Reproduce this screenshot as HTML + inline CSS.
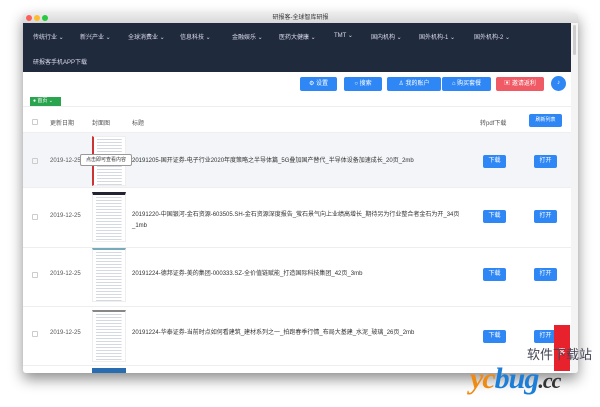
<!DOCTYPE html>
<html><head><meta charset="utf-8"><style>
*{margin:0;padding:0;box-sizing:border-box}
body{width:600px;height:407px;background:#fff;font-family:"Liberation Sans","Noto Sans CJK SC",sans-serif;position:relative;overflow:hidden;color:#333}
.win{position:absolute;left:23px;top:13px;width:555px;height:360px;background:#fff;box-shadow:0 6px 14px rgba(0,0,0,.45);overflow:hidden;border-radius:3px}
.tb{height:10px;background:linear-gradient(#ececec,#d8d8d8);font-size:6px;text-align:center;line-height:10px;color:#333;position:relative}
.d{position:absolute;top:2px;width:6px;height:6px;border-radius:50%}
.nav{position:absolute;top:10px;left:0;width:548px;height:49px;background:#1f2a3c;color:#dde;font-size:6px}
.nav span{position:absolute}
.btn{position:absolute;height:14px;color:#fff;font-size:6px;text-align:center;line-height:14px;border-radius:2px;background:#2f87f5}
.row{position:absolute;left:0;width:548px;border-bottom:1px solid #eee;font-size:6px}
.cb{position:absolute;left:9px;width:6px;height:6px;border:1px solid #ccc;border-radius:1px}
.dt{position:absolute;left:27px;color:#555}
.tt{position:absolute;left:109px;color:#333;line-height:11px}
.th{position:absolute;left:69px;width:34px;background:#fff repeating-linear-gradient(#fff 0 2px,#d4d8e0 2px 3px);background-size:80% 100%;background-position:center;background-repeat:no-repeat;border:1px solid #eee}
.sb{position:absolute;right:0;top:10px;width:7px;height:350px;background:#f4f4f4}
.sb i{position:absolute;left:2px;top:2px;width:3px;height:30px;background:#ccc;border-radius:2px}
</style></head><body>
<div class="win">
<div class="tb">研报客-全球智库研报<i class="d" style="left:3px;background:#fc5f57"></i><i class="d" style="left:11px;background:#fdbc2e"></i><i class="d" style="left:19px;background:#28c840"></i></div>
<div class="nav">
<span style="left:10px;top:9px">传统行业 ⌄</span><span style="left:57px;top:9px">新兴产业 ⌄</span><span style="left:105px;top:9px">全球消费业 ⌄</span><span style="left:157px;top:9px">信息科技 ⌄</span><span style="left:209px;top:9px">金融娱乐 ⌄</span><span style="left:256px;top:9px">医药大健康 ⌄</span><span style="left:311px;top:9px">TMT ⌄</span><span style="left:348px;top:9px">国内机构 ⌄</span><span style="left:396px;top:9px">国外机构-1 ⌄</span><span style="left:451px;top:9px">国外机构-2 ⌄</span>
<span style="left:10px;top:34px">研报客手机APP下载</span></div>
<div class="btn" style="left:277px;top:64px;width:37px">⚙ 设置</div>
<div class="btn" style="left:321px;top:64px;width:38px">○ 搜索</div>
<div class="btn" style="left:364px;top:64px;width:54px">♙ 我的账户</div>
<div class="btn" style="left:419px;top:64px;width:49px">⌂ 购买套餐</div>
<div class="btn" style="left:473px;top:64px;width:48px;background:#ef5a64">▣ 邀请返利</div>
<div class="btn" style="left:528px;top:63px;width:15px;height:15px;border-radius:50%">♪</div>
<div style="position:absolute;left:7px;top:84px;width:31px;height:9px;background:#2aa44f;color:#fff;font-size:5px;line-height:9px;padding-left:3px">● 首页 ⌄</div>
<div style="position:absolute;left:0;top:93px;width:548px;border-top:1px solid #eee"></div>
<div class="row" style="top:97px;height:23px">
<i class="cb" style="top:9px"></i><span class="dt" style="top:8px">更新日期</span><span style="position:absolute;left:69px;top:8px;color:#555">封面图</span><span style="position:absolute;left:109px;top:8px;color:#555">标题</span><span style="position:absolute;left:457px;top:8px;color:#555">转pdf下载</span>
<div class="btn" style="left:506px;top:4px;width:33px;height:13px;line-height:13px;font-size:5px">刷新列表</div></div>
<div class="row" style="top:120px;height:55px;background:#f3f5f8">
<i class="cb" style="top:25px"></i><span class="dt" style="top:25px">2019-12-25</span>
<div class="th" style="top:3px;height:50px;border-left:2px solid #c33"></div>
<div style="position:absolute;left:57px;top:21px;width:52px;height:12px;background:#fff;border:1px solid #999;border-radius:2px;font-size:5px;line-height:10px;text-align:center">点击即可查看内容</div>
<span class="tt" style="top:23px">20191205-国开证券-电子行业2020年度策略之半导体篇_5G叠加国产替代_半导体设备加速成长_20页_2mb</span>
<div class="btn" style="left:460px;top:22px;width:23px;height:13px;line-height:13px">下载</div><div class="btn" style="left:511px;top:22px;width:23px;height:13px;line-height:13px">打开</div></div>
<div class="row" style="top:175px;height:60px">
<i class="cb" style="top:26px"></i><span class="dt" style="top:25px">2019-12-25</span>
<div class="th" style="top:4px;height:50px;border-top:3px solid #223"></div>
<span class="tt" style="top:22px;width:340px">20191220-中国银河-金石资源-603505.SH-金石资源深度报告_萤石景气向上业绩高增长_期待另为行业整合者金石为开_34页_1mb</span>
<div class="btn" style="left:460px;top:22px;width:23px;height:13px;line-height:13px">下载</div><div class="btn" style="left:511px;top:22px;width:23px;height:13px;line-height:13px">打开</div></div>
<div class="row" style="top:235px;height:59px">
<i class="cb" style="top:24px"></i><span class="dt" style="top:23px">2019-12-25</span>
<div class="th" style="top:0;height:54px;border-top:2px solid #7ab"></div>
<span class="tt" style="top:21px">20191224-德邦证券-美的集团-000333.SZ-全价值链赋能_打造国际科技集团_42页_3mb</span>
<div class="btn" style="left:460px;top:20px;width:23px;height:13px;line-height:13px">下载</div><div class="btn" style="left:511px;top:20px;width:23px;height:13px;line-height:13px">打开</div></div>
<div class="row" style="top:294px;height:59px">
<i class="cb" style="top:24px"></i><span class="dt" style="top:23px">2019-12-25</span>
<div class="th" style="top:3px;height:52px;border-top:2px solid #888"></div>
<span class="tt" style="top:21px">20191224-华泰证券-当前时点如何看建筑_建材系列之一_拍跑春季行情_布局大基建_水泥_玻璃_26页_2mb</span>
<div class="btn" style="left:460px;top:23px;width:23px;height:13px;line-height:13px">下载</div><div class="btn" style="left:511px;top:23px;width:23px;height:13px;line-height:13px">打开</div></div>
<div style="position:absolute;left:69px;top:355px;width:34px;height:6px;background:#2a6cb0"></div>
<div class="sb"><i></i></div>
</div>
<div style="position:absolute;left:554px;top:325px;width:16px;height:46px;background:#e8222c;color:#fff;font-size:7px;text-align:center;padding-top:22px">客</div>
<div style="position:absolute;left:527px;top:344px;font-size:13px;color:#445">软件下载站</div>
<div style="position:absolute;left:470px;top:362px;font-size:30px;font-weight:bold;font-style:italic;color:#f08a12;font-family:'Liberation Serif',serif;letter-spacing:-1px">yc<span style="color:#1d7ed8">bug</span><span style="color:#333;font-size:22px">.cc</span></div>
</body></html>
